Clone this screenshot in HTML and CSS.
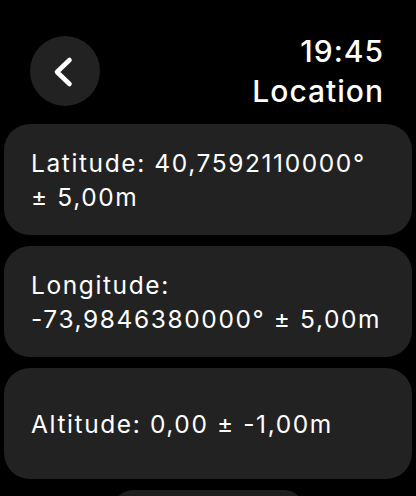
FILE: index.html
```html
<!DOCTYPE html>
<html>
<head>
<meta charset="utf-8">
<link rel="stylesheet" href="styles.css">
</head>
<body>
<div class="screen">
  <header class="header">
    <button class="back" aria-label="Back">
      <svg width="70" height="70" viewBox="0 0 70 70">
        <path d="M39.5 24 L27 36 L39.5 48" fill="none" stroke="#fff" stroke-width="4.6" stroke-linecap="round" stroke-linejoin="round"/>
      </svg>
    </button>
    <div class="titles">
      <div class="time">19:45</div>
      <div class="title">Location</div>
    </div>
  </header>
  <main class="list">
    <div class="card"><p>Latitude: 40,7592110000°<br>± 5,00m</p></div>
    <div class="card"><p>Longitude:<br>-73,9846380000° ± 5,00m</p></div>
    <div class="card"><p>Altitude: 0,00 ± -1,00m</p></div>
    <div class="more"></div>
  </main>
</div>
</body>
</html>
```
FILE: styles.css
```css
html, body {
  margin: 0;
  padding: 0;
  background: #000;
}
.screen {
  width: 416px;
  height: 496px;
  overflow: hidden;
  font-family: Inter, "Noto Sans", sans-serif;
  color: #fff;
}
.header {
  display: flex;
  justify-content: space-between;
  align-items: flex-start;
  padding: 31px 33px 0 30px;
  height: 93px;
}
.back {
  width: 70px;
  height: 70px;
  margin-top: 5px;
  border: none;
  border-radius: 50%;
  background: #222;
  padding: 0;
  display: block;
}
.back svg { display: block; }
.titles {
  text-align: right;
  font-size: 30px;
  line-height: 40px;
  font-weight: 500;
  letter-spacing: 1px;
  margin-right: -1px;
}
.list {
  display: flex;
  flex-direction: column;
  gap: 11px;
  padding: 0 4px;
}
.card {
  height: 111px;
  flex: none;
  background: #222;
  border-radius: 26px;
  display: flex;
  align-items: center;
  padding: 0 10px 0 27px;
  box-sizing: border-box;
}
.card p {
  margin: 0;
  font-size: 24.5px;
  line-height: 34px;
  font-weight: 400;
  letter-spacing: 1.6px;
}
.more {
  align-self: center;
  flex: none;
  width: 191px;
  height: 40px;
  background: #1e1e1e;
  border-radius: 20px;
}
```
